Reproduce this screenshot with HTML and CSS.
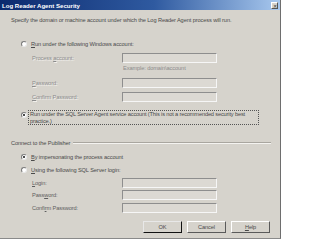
FILE: index.html
```html
<!DOCTYPE html>
<html lang="en">
<head>
    <meta charset="UTF-8">
    <title>Log Reader Agent Security</title>
    <link rel="stylesheet" href="styles.css">
</head>
<body>

    <div class="dialog">
        <div class="titlebar">
            <span class="title">Log Reader Agent Security</span>
            <span class="close-btn">&#x2715;</span>
        </div>

        <div class="content">
            <p class="intro">Specify the domain or machine account under which the Log Reader Agent process will run.</p>

            <div class="option option-first">
                <span class="radio"></span>
                <span><u>R</u>un under the following Windows account:</span>
            </div>

            <div class="fields">
                <div class="field field-first">
                    <span class="label disabled">Process <u>a</u>ccount:</span>
                    <span class="input"></span>
                </div>
                <div class="hint">Example: domain\account</div>
                <div class="field field-pw">
                    <span class="label disabled"><u>P</u>assword:</span>
                    <span class="input"></span>
                </div>
                <div class="field field-confirm">
                    <span class="label disabled"><u>C</u>onfirm Password:</span>
                    <span class="input"></span>
                </div>
            </div>

            <div class="option option-agent">
                <span class="radio checked"></span>
                <span class="focus-box">Run under the SQL Server Agent service account (This is not a recommended security best<br>practice.)</span>
            </div>

            <div class="group-title">
                <span>Connect to the Publisher</span>
                <span class="rule"></span>
            </div>

            <div class="option option-imp">
                <span class="radio checked"></span>
                <span><u>B</u>y impersonating the process account</span>
            </div>
            <div class="option option-sql">
                <span class="radio"></span>
                <span><u>U</u>sing the following SQL Server login:</span>
            </div>

            <div class="fields">
                <div class="field field-login">
                    <span class="label"><u>L</u>ogin:</span>
                    <span class="input"></span>
                </div>
                <div class="field field-pw2">
                    <span class="label">Pass<u>w</u>ord:</span>
                    <span class="input"></span>
                </div>
                <div class="field field-confirm2">
                    <span class="label">Confi<u>r</u>m Password:</span>
                    <span class="input"></span>
                </div>
            </div>

            <div class="buttons">
                <button class="btn btn-default">OK</button>
                <button class="btn">Cancel</button>
                <button class="btn"><u>H</u>elp</button>
            </div>
        </div>
    </div>

</body>
</html>
```

FILE: styles.css
```css
body {
    margin: 0;
    background-color: #ffffff;
    font-family: "Liberation Sans", Arial, sans-serif;
    font-size: 5.65px;
    letter-spacing: -0.1px;
    color: #4a4a4a;
}
.dialog {
    width: 280px;
    height: 238px;
    background-color: #d6d3cc;
    border-right: 1px solid #6e6e6e;
    border-bottom: 1px solid #8a8a8a;
    overflow: hidden;
}
.titlebar {
    height: 10px;
    display: flex;
    align-items: center;
    justify-content: space-between;
    padding: 0 2px;
    background: linear-gradient(to right, #0b2a6e, #2f5aa0 55%, #a8c8ee);
}
.title {
    color: #ffffff;
    font-weight: bold;
    font-size: 6.1px;
    letter-spacing: 0;
}
.close-btn {
    width: 7px;
    height: 7px;
    background-color: #d6d3cc;
    border: 1px solid;
    border-color: #ffffff #555555 #555555 #ffffff;
    font-size: 5px;
    line-height: 6px;
    text-align: center;
    color: #333333;
    box-sizing: border-box;
}
.content {
    padding: 0 8px 0 11px;
}
.intro {
    margin: 6px 0 0 0;
    line-height: 8px;
}
.option {
    display: flex;
    align-items: center;
    margin-left: 10px;
    line-height: 8px;
    gap: 4px;
}
.option-first { margin-top: 16px; }
.option-agent {
    margin-top: 8px;
    align-items: flex-start;
    gap: 1px;
}
.option-agent .radio { margin-top: 2px; }
.option-imp { margin-top: 6px; }
.option-sql { margin-top: 5px; }
.radio {
    width: 6px;
    height: 6px;
    flex: none;
    border-radius: 50%;
    background-color: #ffffff;
    border: 1px solid;
    border-color: #7a7a7a #e8e8e8 #e8e8e8 #7a7a7a;
    box-sizing: border-box;
    position: relative;
}
.radio.checked::after {
    content: "";
    position: absolute;
    left: 1px;
    top: 1px;
    width: 2px;
    height: 2px;
    border-radius: 50%;
    background-color: #111111;
}
.focus-box {
    width: 227px;
    padding: 0 1px;
    border: 1px dotted #555555;
    line-height: 6.5px;
    height: 13px;
    white-space: nowrap;
    overflow: hidden;
    letter-spacing: -0.15px;
}
.fields {
    margin-left: 21px;
}
.field {
    display: flex;
    align-items: center;
}
.field-first { margin-top: 5px; }
.field-pw { margin-top: 6px; }
.field-confirm { margin-top: 4px; }
.field-login { margin-top: 4px; }
.field-pw2 { margin-top: 2px; }
.field-confirm2 { margin-top: 3px; }
.label {
    width: 90px;
    color: #5e5e5e;
}
.label.disabled {
    color: #8c8c8c;
    text-shadow: 1px 1px 0 #f2f0ec;
}
.input {
    width: 95px;
    height: 10px;
    box-sizing: border-box;
    background-color: #dcd9d3;
    border: 1px solid;
    border-color: #8e8e8e #f6f6f6 #f6f6f6 #8e8e8e;
}
.hint {
    margin: 1px 0 0 91px;
    line-height: 8px;
    color: #8c8c8c;
}
.group-title {
    display: flex;
    align-items: center;
    gap: 3px;
    margin-top: 14px;
    line-height: 8px;
}
.rule {
    flex: 1;
    height: 0;
    margin-right: 1px;
    border-top: 1px solid #a9a69f;
    border-bottom: 1px solid #f4f3f0;
}
.buttons {
    display: flex;
    justify-content: flex-end;
    gap: 5px;
    margin: 8px 2px 0 0;
}
.btn {
    width: 39px;
    height: 12px;
    padding: 0;
    font-family: inherit;
    font-size: 5.65px;
    letter-spacing: -0.1px;
    color: #4a4a4a;
    background-color: #d6d3cc;
    border: 1px solid;
    border-color: #ffffff #5a5a5a #5a5a5a #ffffff;
}
.btn-default {
    border-color: #e8e8e8 #111111 #111111 #e8e8e8;
}
```
